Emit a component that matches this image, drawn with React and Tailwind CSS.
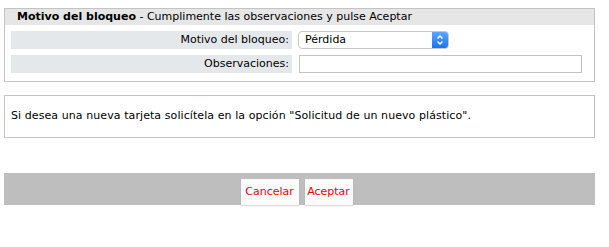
import React from "react";

const font = { fontFamily: '"DejaVu Sans", Verdana, sans-serif' };

const SelectArrows = () => (
  <svg width="8" height="12" viewBox="0 0 8 12" fill="none" stroke="white" strokeWidth="1.4">
    <path d="M1.5 4.5 L4 2 L6.5 4.5" />
    <path d="M1.5 7.5 L4 10 L6.5 7.5" />
  </svg>
);

const App = () => {
  return (
    <div className="w-[609px] h-[247px] bg-white text-[11px] text-black pt-[8px] pl-[4px]" style={font}>
      <div className="w-[591px] h-[74px] border border-[#c3c3c3]">
        <div className="h-[16px] bg-[#e6e6e6] pl-[12px] leading-[16px]">
          <span className="font-bold">Motivo del bloqueo</span>
          <span> - Cumplimente las observaciones y pulse Aceptar</span>
        </div>
        <div className="flex flex-col gap-[6px] pt-[6px] pl-[6px]">
          <div className="flex gap-[6px] h-[18px]">
            <div className="w-[281px] bg-[#e5e8eb] text-right pr-[3px] leading-[18px]">Motivo del bloqueo:</div>
            <div className="flex w-[151px] h-[18px] rounded-[4px] border border-[#c8c8c8] bg-white overflow-hidden">
              <span className="flex-1 pl-[6px] leading-[16px]">Pérdida</span>
              <span className="w-[16px] bg-gradient-to-b from-[#5aa8ff] to-[#1a73f0] flex items-center justify-center">
                <SelectArrows />
              </span>
            </div>
          </div>
          <div className="flex gap-[6px] h-[18px]">
            <div className="w-[281px] bg-[#e5e8eb] text-right pr-[3px] leading-[18px]">Observaciones:</div>
            <input className="ml-[1px] w-[283px] h-[18px] border border-[#c3c3c3] outline-none px-[3px] text-[11px]" />
          </div>
        </div>
      </div>

      <div className="mt-[13px] w-[591px] h-[43px] border border-[#c3c3c3] flex items-center pl-[6px] tracking-[0.08px]">
        Si desea una nueva tarjeta solicítela en la opción "Solicitud de un nuevo plástico".
      </div>

      <div className="mt-[35px] w-[591px] h-[32px] bg-[#bebebe] flex items-end justify-center gap-[6px] pr-[6px]">
        <button className="h-[26px] w-[58px] bg-[#fbfbfb] text-[#ff0000] text-[11px] shadow-[0_1px_1px_rgba(0,0,0,0.15)]">Cancelar</button>
        <button className="h-[26px] w-[48px] bg-[#fbfbfb] text-[#ff0000] text-[11px] shadow-[0_1px_1px_rgba(0,0,0,0.15)]">Aceptar</button>
      </div>
    </div>
  );
};

export default App;
